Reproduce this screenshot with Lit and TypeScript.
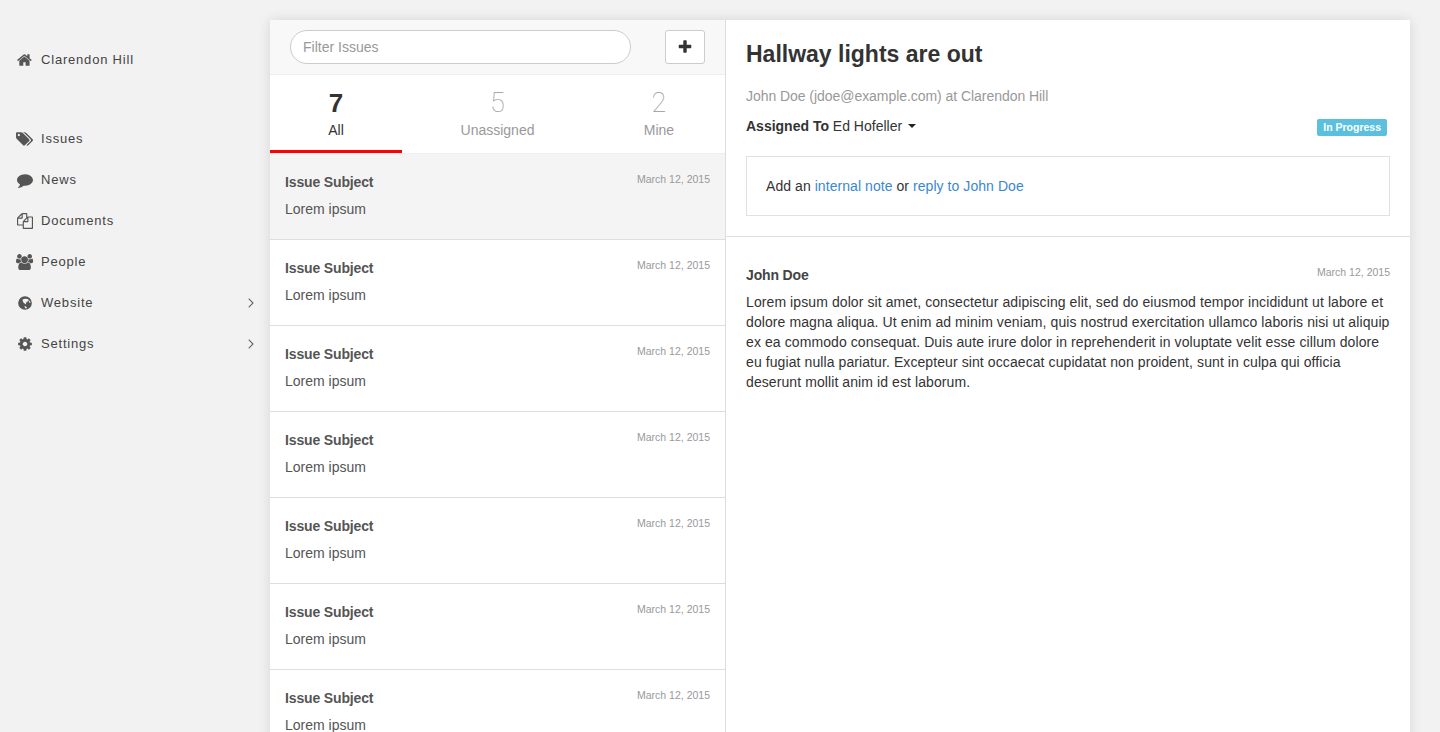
import { LitElement, css, html, svg } from 'lit'
import { customElement } from 'lit/decorators.js'

const ICONS = {
  home: { w: 1792, d: 'M1408 992v480q0 26-19 45t-45 19h-384v-384h-256v384h-384q-26 0-45-19t-19-45v-480q0-1 .5-3t.5-3l575-474 575 474q1 2 1 6zm223-69l-62 74q-8 9-21 11h-3q-13 0-21-7l-692-577-692 577q-12 8-24 7-13-2-21-11l-62-74q-8-10-7-23.5t11-21.5l719-599q32-26 76-26t76 26l244 204v-195q0-14 9-23t23-9h192q14 0 23 9t9 23v408l219 182q10 8 11 21.5t-7 23.5z' },
  tags: { w: 1920, d: 'M448 448q0-53-37.500-90.500t-90.500-37.500-90.500 37.500-37.500 90.500 37.500 90.500 90.500 37.500 90.500-37.500 37.500-90.500zm1067 576q0 53-37 90l-491 492q-39 37-91 37-53 0-90-37l-715-716q-38-37-64.500-101t-26.500-117v-416q0-52 38-90t90-38h416q53 0 117 26.500t102 64.500l715 714q37 39 37 91zm384 0q0 53-37 90l-491 492q-39 37-91 37-36 0-59-14t-53-45l470-470q37-37 37-90 0-52-37-91l-715-714q-38-38-102-64.500t-117-26.500h224q53 0 117 26.500t102 64.500l715 714q37 39 37 91z' },
  comment: { w: 1792, d: 'M1792 896q0 174-120 321.500t-326 233-450 85.500q-70 0-145-8-198 175-460 242-49 14-114 22-17 2-30.500-9t-17.500-29v-1q-3-4-.5-12t2-10 4.500-9.500l6-9 7-8.500 8-9q7-8 31-34.500t34.500-38 31-39.500 32.500-51 27-59 26-76q-157-89-247.500-220t-90.500-281q0-130 71-248.500t191-204.500 286-136.500 348-50.500q244 0 450 85.500t326 233 120 321.500z' },
  files: { w: 1792, d: 'M1696 384q40 0 68 28t28 68v1216q0 40-28 68t-68 28h-960q-40 0-68-28t-28-68v-288h-544q-40 0-68-28t-28-68v-672q0-40 20-88t48-76l408-408q28-28 76-48t88-20h416q40 0 68 28t28 68v328q68-40 128-40h416zm-544 213l-299 299h299v-299zm-640-384l-299 299h299v-299zm196 647l316-316v-416h-384v416q0 40-28 68t-68 28h-416v640h512v-256q0-40 20-88t48-76zm956 804v-1152h-384v416q0 40-28 68t-68 28h-416v640h896z' },
  users: { w: 1920, d: 'M593 896q-162 5-265 128h-134q-82 0-138-40.500t-56-118.500q0-353 124-353 6 0 43.500 21t97.500 42.500 119 21.500q67 0 133-23-5 37-5 66 0 139 81 256zm1071 637q0 120-73 189.500t-194 69.500h-874q-121 0-194-69.500t-73-189.500q0-53 3.500-103.500t14-109 26.500-108.500 43-97.500 62-81 85.500-53.500 111.500-20q10 0 43 21.500t73 48 107 48 135 21.500 135-21.500 107-48 73-48 43-21.500q61 0 111.500 20t85.500 53.500 62 81 43 97.500 26.500 108.500 14 109 3.500 103.500zm-1024-1277q0 106-75 181t-181 75-181-75-75-181 75-181 181-75 181 75 75 181zm704 384q0 159-112.500 271.500t-271.500 112.500-271.500-112.500-112.500-271.500 112.500-271.500 271.500-112.500 271.500 112.500 112.500 271.500zm576 225q0 78-56 118.500t-138 40.500h-134q-103-123-265-128 81-117 81-256 0-29-5-66 66 23 133 23 59 0 119-21.500t97.500-42.500 43.500-21q124 0 124 353zm-128-609q0 106-75 181t-181 75-181-75-75-181 75-181 181-75 181 75 75 181z' },
  globe: { w: 1792, d: 'M896 128a768 768 0 1 0 0 1536a768 768 0 1 0 0-1536zM620 500l260-90 320 30 120 120-60 150-190 60-60 170-100 110-70-130-130-90-60-150zM860 1240l130 40 120 110-60 130-120-40-70-120zM1380 620l130 170-30 110-110-60-40-120z' },
  cog: { w: 1792, d: 'M1152 896q0-106-75-181t-181-75-181 75-75 181 75 181 181 75 181-75 75-181zm512-109v222q0 12-8 23t-20 13l-185 28q-19 54-39 91 35 50 107 138 10 12 10 25t-9 23q-27 37-99 108t-94 71q-12 0-26-9l-138-108q-44 23-91 38-16 136-29 186-7 28-36 28h-222q-14 0-24.500-8.500t-11.500-21.500l-28-184q-49-16-90-37l-141 107q-10 9-25 9-14 0-25-11-126-114-165-168-7-10-7-23 0-12 8-23 15-21 51-66.500t54-70.500q-27-50-41-99l-183-27q-13-2-21-12.500t-8-23.500v-222q0-12 8-23t19-13l186-28q14-46 39-92-40-57-107-138-10-12-10-24 0-10 9-23 26-36 98.500-107.500t94.500-71.500q13 0 26 10l138 107q44-23 91-38 16-136 29-186 7-28 36-28h222q14 0 24.500 8.500t11.500 21.500l28 184q49 16 90 37l142-107q9-9 24-9 13 0 25 10 129 119 165 170 7 8 7 22 0 12-8 23-15 21-51 66.500t-54 70.500q26 50 41 98l183 28q13 2 21 12.500t8 23.500z' },
  plus: { w: 1792, d: 'M1600 736v192q0 40-28 68t-68 28h-416v416q0 40-28 68t-68 28h-192q-40 0-68-28t-28-68v-416h-416q-40 0-68-28t-28-68v-192q0-40 28-68t68-28h416v-416q0-40 28-68t68-28h192q40 0 68 28t28 68v416h416q40 0 68 28t28 68z' },
}

type IconName = keyof typeof ICONS

function icon(name: IconName) {
  const i = ICONS[name]
  return html`<svg class="icon" viewBox="0 0 ${i.w} 1792" style="width:${(i.w / 1792) * 16}px">${svg`<path fill-rule="evenodd" d=${i.d}></path>`}</svg>`
}

const NAV: { label: string; icon: IconName; more?: boolean }[] = [
  { label: 'Issues', icon: 'tags' },
  { label: 'News', icon: 'comment' },
  { label: 'Documents', icon: 'files' },
  { label: 'People', icon: 'users' },
  { label: 'Website', icon: 'globe', more: true },
  { label: 'Settings', icon: 'cog', more: true },
]

const ISSUES = [0, 1, 2, 3, 4, 5, 6]

@customElement('app-root')
export class AppRoot extends LitElement {
  static styles = css`
    :host {
      display: flex;
      height: 732px;
      overflow: hidden;
      background: #f2f2f2;
      font-family: 'Liberation Sans', Arial, sans-serif;
      font-size: 14px;
      line-height: 20px;
      color: #333;
    }
    .sidebar {
      width: 270px;
      flex: none;
      padding-top: 50px;
      box-sizing: border-box;
      color: #444;
      font-size: 13px;
      letter-spacing: 0.8px;
    }
    .nav-item {
      display: flex;
      align-items: center;
      height: 20px;
      margin-bottom: 21px;
      padding-right: 16px;
    }
    .nav-item.brand {
      margin-bottom: 59px;
    }
    .icon-box {
      width: 18px;
      margin: 0 7px 0 16px;
      display: flex;
      justify-content: center;
      flex: none;
    }
    .icon {
      height: 16px;
      fill: #555;
      flex: none;
    }
    .chevron {
      margin-left: auto;
      width: 6px;
      height: 10px;
      fill: none;
      stroke: #666;
      stroke-width: 1.1;
    }
    .panel {
      margin-top: 20px;
      width: 1140px;
      flex: none;
      display: flex;
      background: #fff;
      box-shadow: 0 0 12px rgba(0, 0, 0, 0.12);
      height: 760px;
    }
    .list {
      width: 456px;
      flex: none;
      box-sizing: border-box;
      border-right: 1px solid #ddd;
    }
    .filter-bar {
      height: 55px;
      box-sizing: border-box;
      background: #f8f8f8;
      border-bottom: 1px solid #eee;
      display: flex;
      align-items: flex-start;
      padding: 10px 20px 0;
      justify-content: space-between;
    }
    .filter {
      width: 341px;
      height: 34px;
      box-sizing: border-box;
      border: 1px solid #ccc;
      border-radius: 17px;
      background: #fff;
      padding: 0 12px;
      font: inherit;
      color: #333;
      outline: none;
    }
    .filter::placeholder {
      color: #999;
      opacity: 1;
    }
    .add {
      width: 40px;
      height: 34px;
      box-sizing: border-box;
      border: 1px solid #ccc;
      border-radius: 3px;
      background: #fff;
      display: flex;
      align-items: center;
      justify-content: center;
      padding: 0;
    }
    .add .icon {
      fill: #333;
    }
    .tabs {
      display: grid;
      grid-template-columns: 132px 191px 1fr;
      height: 79px;
      box-sizing: border-box;
      border-bottom: 1px solid #eee;
    }
    .tab {
      text-align: center;
      color: #999;
      height: 78px;
      box-sizing: border-box;
      padding-top: 14px;
    }
    .tab.active {
      color: #333;
      border-bottom: 3px solid #f00;
    }
    .tab b {
      display: block;
      font-family: Roboto, 'Liberation Sans', sans-serif;
      font-size: 27px;
      line-height: 28px;
      font-weight: 100;
      margin-bottom: 3px;
    }
    .tab.active b {
      font-family: 'Liberation Sans', Arial, sans-serif;
      font-size: 26px;
      font-weight: 700;
    }
    .issue {
      height: 86px;
      box-sizing: border-box;
      border-bottom: 1px solid #ddd;
      padding: 18px 15px 0;
      color: #555;
    }
    .issue.selected {
      background: #f4f4f4;
    }
    .issue-top {
      display: flex;
      justify-content: space-between;
      margin-bottom: 7px;
    }
    .subject {
      font-weight: 700;
      letter-spacing: -0.15px;
    }
    .date {
      font-size: 10.5px;
      line-height: 14px;
      color: #999;
    }
    .detail {
      flex: 1;
      min-width: 0;
    }
    .head {
      padding: 20px 20px 20px;
      border-bottom: 1px solid #ddd;
    }
    h1 {
      margin: 0 0 18px;
      font-size: 23px;
      line-height: 28px;
      font-weight: 700;
      color: #333;
    }
    .from {
      color: #999;
      margin-bottom: 10px;
      letter-spacing: -0.05px;
    }
    .assign {
      display: flex;
      align-items: center;
      margin-bottom: 20px;
      padding-right: 3px;
    }
    .caret {
      width: 0;
      height: 0;
      margin-left: 6px;
      border-left: 4px solid transparent;
      border-right: 4px solid transparent;
      border-top: 4px solid #222;
    }
    .badge {
      margin: 2px 0 0 auto;
      background: #5bc0de;
      color: #fff;
      font-size: 10.5px;
      font-weight: 700;
      line-height: 17px;
      height: 17px;
      padding: 0 6px;
      border-radius: 2px;
    }
    .note {
      border: 1px solid #e1e1e1;
      height: 60px;
      box-sizing: border-box;
      padding: 19px;
      letter-spacing: 0.06px;
    }
    a {
      color: #3b87d0;
      text-decoration: none;
    }
    .message {
      padding: 28px 20px;
    }
    .message-top {
      display: flex;
      justify-content: space-between;
      margin-bottom: 7px;
    }
    .author {
      font-weight: 700;
      color: #444;
      letter-spacing: -0.15px;
    }
    p {
      margin: 0;
      letter-spacing: 0.09px;
    }
  `

  render() {
    return html`
      <nav class="sidebar">
        <div class="nav-item brand"><span class="icon-box">${icon('home')}</span>Clarendon Hill</div>
        ${NAV.map(
          (n) => html`
            <div class="nav-item">
              <span class="icon-box">${icon(n.icon)}</span>${n.label}
              ${n.more
                ? html`<svg class="chevron" viewBox="0 0 6 10"><path d="M.7.7 5 5 .7 9.300"></path></svg>`
                : ''}
            </div>
          `
        )}
      </nav>
      <main class="panel">
        <section class="list">
          <div class="filter-bar">
            <input class="filter" placeholder="Filter Issues" />
            <button class="add">${icon('plus')}</button>
          </div>
          <div class="tabs">
            <div class="tab active"><b>7</b>All</div>
            <div class="tab"><b>5</b>Unassigned</div>
            <div class="tab"><b>2</b>Mine</div>
          </div>
          ${ISSUES.map(
            (i) => html`
              <div class="issue ${i === 0 ? 'selected' : ''}">
                <div class="issue-top">
                  <span class="subject">Issue Subject</span>
                  <span class="date">March 12, 2015</span>
                </div>
                Lorem ipsum
              </div>
            `
          )}
        </section>
        <section class="detail">
          <div class="head">
            <h1>Hallway lights are out</h1>
            <div class="from">John Doe (jdoe@example.com) at Clarendon Hill</div>
            <div class="assign">
              <b>Assigned To</b>&nbsp;Ed Hofeller<span class="caret"></span>
              <span class="badge">In Progress</span>
            </div>
            <div class="note">
              Add an <a href="#">internal note</a> or <a href="#">reply to John Doe</a>
            </div>
          </div>
          <div class="message">
            <div class="message-top">
              <span class="author">John Doe</span>
              <span class="date">March 12, 2015</span>
            </div>
            <p>
              Lorem ipsum dolor sit amet, consectetur adipiscing elit, sed do eiusmod tempor incididunt ut labore et
              dolore magna aliqua. Ut enim ad minim veniam, quis nostrud exercitation ullamco laboris nisi ut aliquip
              ex ea commodo consequat. Duis aute irure dolor in reprehenderit in voluptate velit esse cillum dolore
              eu fugiat nulla pariatur. Excepteur sint occaecat cupidatat non proident, sunt in culpa qui officia
              deserunt mollit anim id est laborum.
            </p>
          </div>
        </section>
      </main>
    `
  }
}
